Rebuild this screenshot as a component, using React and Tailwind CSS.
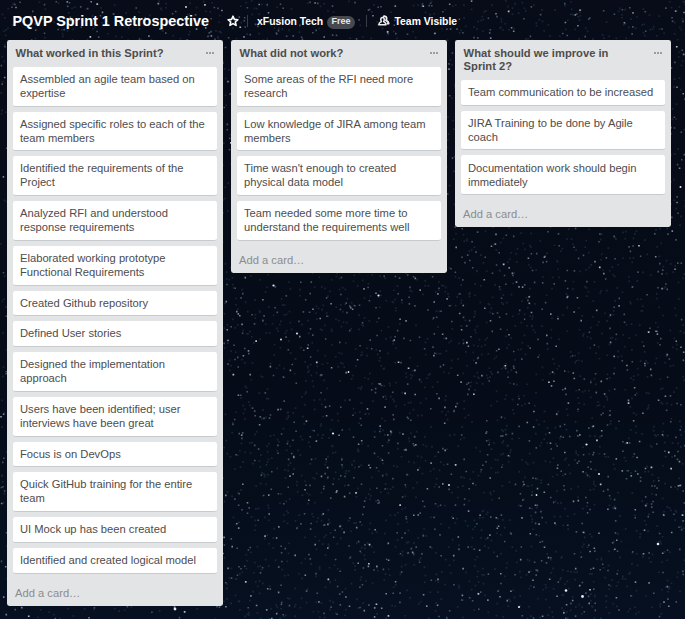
const lists = [
  {
    title: "What worked in this Sprint?",
    cards: [
      "Assembled an agile team based on expertise",
      "Assigned specific roles to each of the team members",
      "Identified the requirements of the Project",
      "Analyzed RFI and understood response requirements",
      "Elaborated working prototype Functional Requirements",
      "Created Github repository",
      "Defined User stories",
      "Designed the implementation approach",
      "Users have been identified; user interviews have been great",
      "Focus is on DevOps",
      "Quick GitHub training for the entire team",
      "UI Mock up has been created",
      "Identified and created logical model",
    ],
  },
  {
    title: "What did not work?",
    cards: [
      "Some areas of the RFI need more research",
      "Low knowledge of JIRA among team members",
      "Time wasn't enough to created physical data model",
      "Team needed some more time to understand the requirements well",
    ],
  },
  {
    title: "What should we improve in Sprint 2?",
    cards: [
      "Team communication to be increased",
      "JIRA Training to be done by Agile coach",
      "Documentation work should begin immediately",
    ],
  },
];

// Seeded generator, so the sky is the same on every load.
function makeRandom(seed) {
  let a = seed;
  return () => {
    a = (a + 0x6d2b79f5) | 0;
    let t = Math.imul(a ^ (a >>> 15), 1 | a);
    t = (t + Math.imul(t ^ (t >>> 7), 61 | t)) ^ t;
    return ((t ^ (t >>> 14)) >>> 0) / 4294967296;
  };
}

function starPath(seed, count, size) {
  const random = makeRandom(seed);
  let d = "";
  for (let i = 0; i < count; i++) {
    const x = (random() * 685).toFixed(1);
    const y = (random() * 619).toFixed(1);
    d += `M${x} ${y}h${size}v${size}h-${size}z`;
  }
  return d;
}

const starLayers = [
  { d: starPath(11, 4200, 1.7), fill: "#35506a", opacity: 0.38 },
  { d: starPath(57, 1700, 1.6), fill: "#7f95ab", opacity: 0.5 },
  { d: starPath(203, 700, 1.6), fill: "#b4c3d2", opacity: 0.65 },
  { d: starPath(977, 110, 1.7), fill: "#dce8f2", opacity: 0.8 },
];

// The brightest stars: x, y, radius.
const brightStars = [
  [273.5, 285.5, 1.1], [378.5, 295.5, 1.1], [297, 333.5, 1], [281, 339.5, 0.9],
  [348.5, 372, 0.9], [333, 433.5, 1.1], [586.5, 444.5, 1.1], [599, 474, 1],
  [536.5, 495, 0.9], [566, 590.5, 1.3], [582.5, 596.5, 1.4], [658, 544, 1.3],
  [449, 485, 1], [519, 607, 1.1], [175, 609, 1.4], [186, 7, 0.9], [680.5, 187, 1],
];

function NightSky() {
  return (
    <svg className="absolute inset-0 h-full w-full" viewBox="0 0 685 619" aria-hidden="true">
      <defs>
        <linearGradient id="sky" x1="0" y1="0" x2="0" y2="1">
          <stop offset="0" stopColor="#070c18" />
          <stop offset="0.6" stopColor="#050b17" />
          <stop offset="1" stopColor="#061020" />
        </linearGradient>
      </defs>
      <rect width="685" height="619" fill="url(#sky)" />
      {starLayers.map((layer, i) => (
        <path key={i} d={layer.d} fill={layer.fill} opacity={layer.opacity} />
      ))}
      {brightStars.map(([x, y, r], i) => (
        <circle key={i} cx={x} cy={y} r={r} fill="#e3edf6" />
      ))}
    </svg>
  );
}

function Star() {
  return (
    <svg className="h-3 w-3" viewBox="0 0 12 12" fill="none" stroke="#fff" strokeWidth="1.6" strokeLinejoin="round">
      <path d="M6 1.2 7.4 4.4 10.9 4.7 8.3 7 9.1 10.4 6 8.6 2.9 10.4 3.7 7 1.1 4.7 4.6 4.4Z" />
    </svg>
  );
}

function People() {
  return (
    <svg className="h-3 w-3" viewBox="0 0 12 12" fill="none" stroke="#eee" strokeLinejoin="round">
      <path strokeWidth="1.5" d="M4.6 2.6C6 2.6 6.4 3.7 6.2 4.8 6.1 5.7 5.8 6.2 5.6 6.6 6.6 7.3 7.9 7.6 8 9.7H0.8C0.9 7.7 2.3 7.3 3.4 6.6 3 6 2.8 5.5 2.8 4.6 2.8 3.4 3.4 2.6 4.6 2.6Z" />
      <path strokeWidth="1.8" d="M5.2 1.8C6 0.9 8.4 1 8.6 2.8 8.8 3.9 8.3 4.8 7.9 5.3 9.1 6 10.5 6.3 10.7 8.6H8.6" />
    </svg>
  );
}

function Header() {
  return (
    <header className="flex h-[40px] items-center pt-[2px] pl-[12.5px] text-[10.4px] font-bold whitespace-nowrap text-white">
      <h1 className="w-[214px] text-[14.4px] leading-[18px]">PQVP Sprint 1 Retrospective</h1>
      <Star />
      <span className="ml-[8px] h-3 w-px bg-white/20" />
      <span className="mt-px ml-[9.5px] w-[67px]">xFusion Tech</span>
      <span className="mt-[2px] ml-[3px] flex h-[13px] w-[28px] items-center justify-center rounded-full bg-[#46494f] text-[9px] font-bold text-[#e8e8e8]">
        Free
      </span>
      <span className="ml-[11px] h-3 w-px bg-white/20" />
      <span className="mt-px ml-[10.5px] flex items-center gap-[5px]">
        <People />
        Team Visible
      </span>
    </header>
  );
}

function Card({ text }) {
  return (
    <li className="rounded-[2.4px] border-b border-[#c8cbce] bg-white px-[7px] pt-[5.2px] pb-[5.6px] text-[11.2px] leading-[14px] text-[#4d4d4d]">
      {text}
    </li>
  );
}

function List({ title, cards }) {
  return (
    <section className="w-[216px] shrink-0 rounded-[2.4px] bg-[#e2e4e6] px-[6px]">
      <div className="flex justify-between pt-[6.6px] pr-[3px] pb-[6.96px] pl-[2.6px]">
        <h2 className="w-[170px] text-[11.2px] leading-[13.2px] font-bold text-[#4d4d4d]">{title}</h2>
        <div className="flex gap-px pt-[5px]">
          <span className="h-[2px] w-[2px] bg-[#9c9d9e]" />
          <span className="h-[2px] w-[2px] bg-[#9c9d9e]" />
          <span className="h-[2px] w-[2px] bg-[#9c9d9e]" />
        </div>
      </div>
      <ul className="flex flex-col gap-[4.98px]">
        {cards.map((text) => (
          <Card key={text} text={text} />
        ))}
      </ul>
      <div className="pt-[12.2px] pb-[5.8px] pl-[2px] text-[11.2px] leading-[14px] text-[#8c8c8c]">Add a card…</div>
    </section>
  );
}

export default function App() {
  return (
    <div className="relative h-[619px] w-[685px] overflow-hidden bg-[#060c18] font-['Liberation_Sans',Arial,sans-serif]">
      <NightSky />
      <div className="relative">
        <Header />
        <main className="flex items-start gap-2 pl-[7px]">
          {lists.map((list) => (
            <List key={list.title} {...list} />
          ))}
        </main>
      </div>
    </div>
  );
}
